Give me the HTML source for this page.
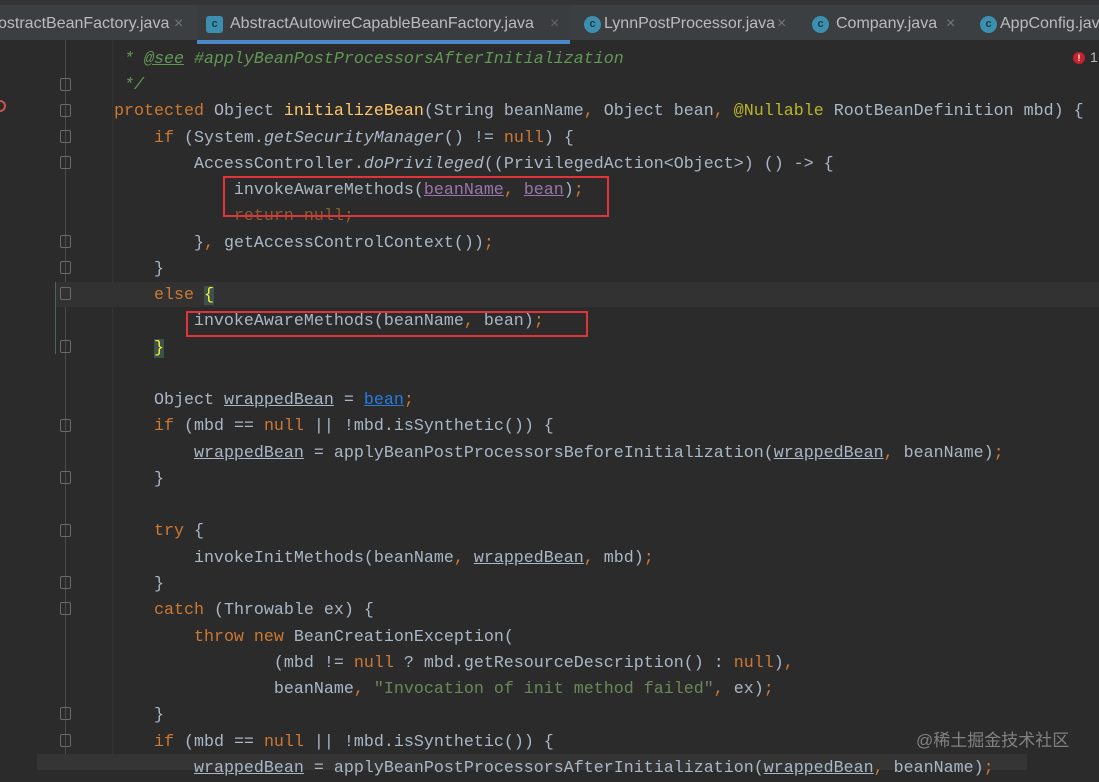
<!DOCTYPE html>
<html><head><meta charset="utf-8"><style>
*{margin:0;padding:0;box-sizing:border-box}
body{width:1099px;height:770px;overflow:hidden;background:#2b2b2b;position:relative;font-family:"Liberation Mono",monospace}
.tabs{position:absolute;left:0;top:0;width:1099px;height:40px;background:#3c3f41;border-top:5px solid #333537;font-family:"Liberation Sans",sans-serif;font-size:16px;color:#bbbbbb}
.tabs span{position:absolute;top:10px;white-space:nowrap}
.ic{position:absolute;top:11px;width:17px;height:17px;border-radius:50%;background:#3d8fb0;color:#1f3a46;font-size:11px;line-height:17px;text-align:center;font-weight:bold}
.x{color:#777}
.act{position:absolute;left:197px;top:0;width:373px;height:35px;background:#3a3d3f}
.under{position:absolute;left:197px;top:35px;width:373px;height:4px;background:#4a88c7}
.l{position:absolute;left:74px;height:26px;line-height:26px;font-size:16.67px;color:#a9b7c6;white-space:pre}
.k{color:#cc7832}.m{color:#ffc66d}.c{color:#629755;font-style:italic}.a{color:#bbb529}.s{color:#6a8759}.p{color:#9876aa}.u{text-decoration:underline}.i{font-style:italic}.b{color:#287bde;text-decoration:underline}
.fold{position:absolute;left:60px;width:11px;height:13px;border:1px solid #6a6a6a;border-radius:2px}
.box{position:absolute;border:2px solid #e0343a}
</style></head><body>
<div class="tabs">
<div class="act"></div><div class="under"></div>
<span style="left:-2px">ostractBeanFactory.java</span><span class="x" style="left:174px">×</span>
<div class="ic" style="left:206px;border-radius:3px">c</div><span style="left:230px">AbstractAutowireCapableBeanFactory.java</span><span class="x" style="left:550px;color:#666">×</span>
<div class="ic" style="left:584px">c</div><span style="left:604px">LynnPostProcessor.java</span><span class="x" style="left:777px">×</span>
<div class="ic" style="left:812px">c</div><span style="left:836px">Company.java</span><span class="x" style="left:946px">×</span>
<div class="ic" style="left:980px">c</div><span style="left:1000px">AppConfig.java</span>
</div>
<div style="position:absolute;left:65px;top:40px;width:1px;height:730px;background:#4a4a4a"></div>
<div style="position:absolute;left:112px;top:40px;width:1px;height:730px;background:#333"></div>
<div style="position:absolute;left:55px;top:282px;width:1px;height:72px;background:#4a6a55"></div>
<div style="position:absolute;left:56px;top:282px;width:1043px;height:25px;background:#323232"></div>
<div style="position:absolute;left:37px;top:754px;width:990px;height:16px;background:#353535"></div>
<div style="position:absolute;left:1073px;top:52px;width:12px;height:12px;border-radius:50%;background:#c7222d;color:#fff;font:bold 9px/12px 'Liberation Sans';text-align:center">!</div>
<div style="position:absolute;left:1090px;top:49px;color:#bbb;font:14px 'Liberation Sans'">1</div>
<div style="position:absolute;left:-6px;top:100px;width:12px;height:12px;border-radius:50%;border:2px solid #c75450"></div>
<div class="fold" style="top:78px"></div><div class="fold" style="top:104px"></div><div class="fold" style="top:130px"></div><div class="fold" style="top:156px"></div><div class="fold" style="top:235px"></div><div class="fold" style="top:261px"></div><div class="fold" style="top:287px"></div><div class="fold" style="top:340px"></div><div class="fold" style="top:419px"></div><div class="fold" style="top:471px"></div><div class="fold" style="top:524px"></div><div class="fold" style="top:576px"></div><div class="fold" style="top:602px"></div><div class="fold" style="top:707px"></div><div class="fold" style="top:734px"></div>
<div class="l" style="top:47px"><span class="c">     * <span class="u">@see</span> #applyBeanPostProcessorsAfterInitialization</span></div>
<div class="l" style="top:73px"><span class="c">     */</span></div>
<div class="l" style="top:99px">    <span class="k">protected</span> Object <span class="m">initializeBean</span>(String beanName<span class="k">,</span> Object bean<span class="k">,</span> <span class="a">@Nullable</span> RootBeanDefinition mbd) {</div>
<div class="l" style="top:126px">        <span class="k">if</span> (System.<span class="i">getSecurityManager</span>() != <span class="k">null</span>) {</div>
<div class="l" style="top:152px">            AccessController.<span class="i">doPrivileged</span>((PrivilegedAction&lt;Object&gt;) () -&gt; {</div>
<div class="l" style="top:178px">                invokeAwareMethods(<span class="p u">beanName</span><span class="k">,</span> <span class="p u">bean</span>)<span class="k">;</span></div>
<div class="l" style="top:204px">                <span style="color:#8a5a30">return null;</span></div>
<div class="l" style="top:231px">            }<span class="k">,</span> getAccessControlContext())<span class="k">;</span></div>
<div class="l" style="top:257px">        }</div>
<div class="l" style="top:283px">        <span class="k">else</span> <span style="color:#ffef28;background:#3b514d">{</span></div>
<div class="l" style="top:309px">            invokeAwareMethods(beanName<span class="k">,</span> bean)<span class="k">;</span></div>
<div class="l" style="top:336px">        <span style="color:#ffef28;background:#3b514d">}</span></div>
<div class="l" style="top:388px">        Object <span class="u">wrappedBean</span> = <span class="b">bean</span><span class="k">;</span></div>
<div class="l" style="top:414px">        <span class="k">if</span> (mbd == <span class="k">null</span> || !mbd.isSynthetic()) {</div>
<div class="l" style="top:441px">            <span class="u">wrappedBean</span> = applyBeanPostProcessorsBeforeInitialization(<span class="u">wrappedBean</span><span class="k">,</span> beanName)<span class="k">;</span></div>
<div class="l" style="top:467px">        }</div>
<div class="l" style="top:519px">        <span class="k">try</span> {</div>
<div class="l" style="top:546px">            invokeInitMethods(beanName<span class="k">,</span> <span class="u">wrappedBean</span><span class="k">,</span> mbd)<span class="k">;</span></div>
<div class="l" style="top:572px">        }</div>
<div class="l" style="top:598px">        <span class="k">catch</span> (Throwable ex) {</div>
<div class="l" style="top:625px">            <span class="k">throw new</span> BeanCreationException(</div>
<div class="l" style="top:651px">                    (mbd != <span class="k">null</span> ? mbd.getResourceDescription() : <span class="k">null</span>)<span class="k">,</span></div>
<div class="l" style="top:677px">                    beanName<span class="k">,</span> <span class="s">"Invocation of init method failed"</span><span class="k">,</span> ex)<span class="k">;</span></div>
<div class="l" style="top:703px">        }</div>
<div class="l" style="top:730px">        <span class="k">if</span> (mbd == <span class="k">null</span> || !mbd.isSynthetic()) {</div>
<div class="l" style="top:756px">            <span class="u">wrappedBean</span> = applyBeanPostProcessorsAfterInitialization(<span class="u">wrappedBean</span><span class="k">,</span> beanName)<span class="k">;</span></div>
<div class="box" style="left:223px;top:176px;width:386px;height:41px"></div>
<div class="box" style="left:186px;top:311px;width:402px;height:26px"></div>
<div style="position:absolute;left:916px;top:726px;color:rgba(200,200,200,0.55);font:17px 'Liberation Sans','Noto Sans CJK SC',sans-serif">@稀土掘金技术社区</div>
</body></html>
